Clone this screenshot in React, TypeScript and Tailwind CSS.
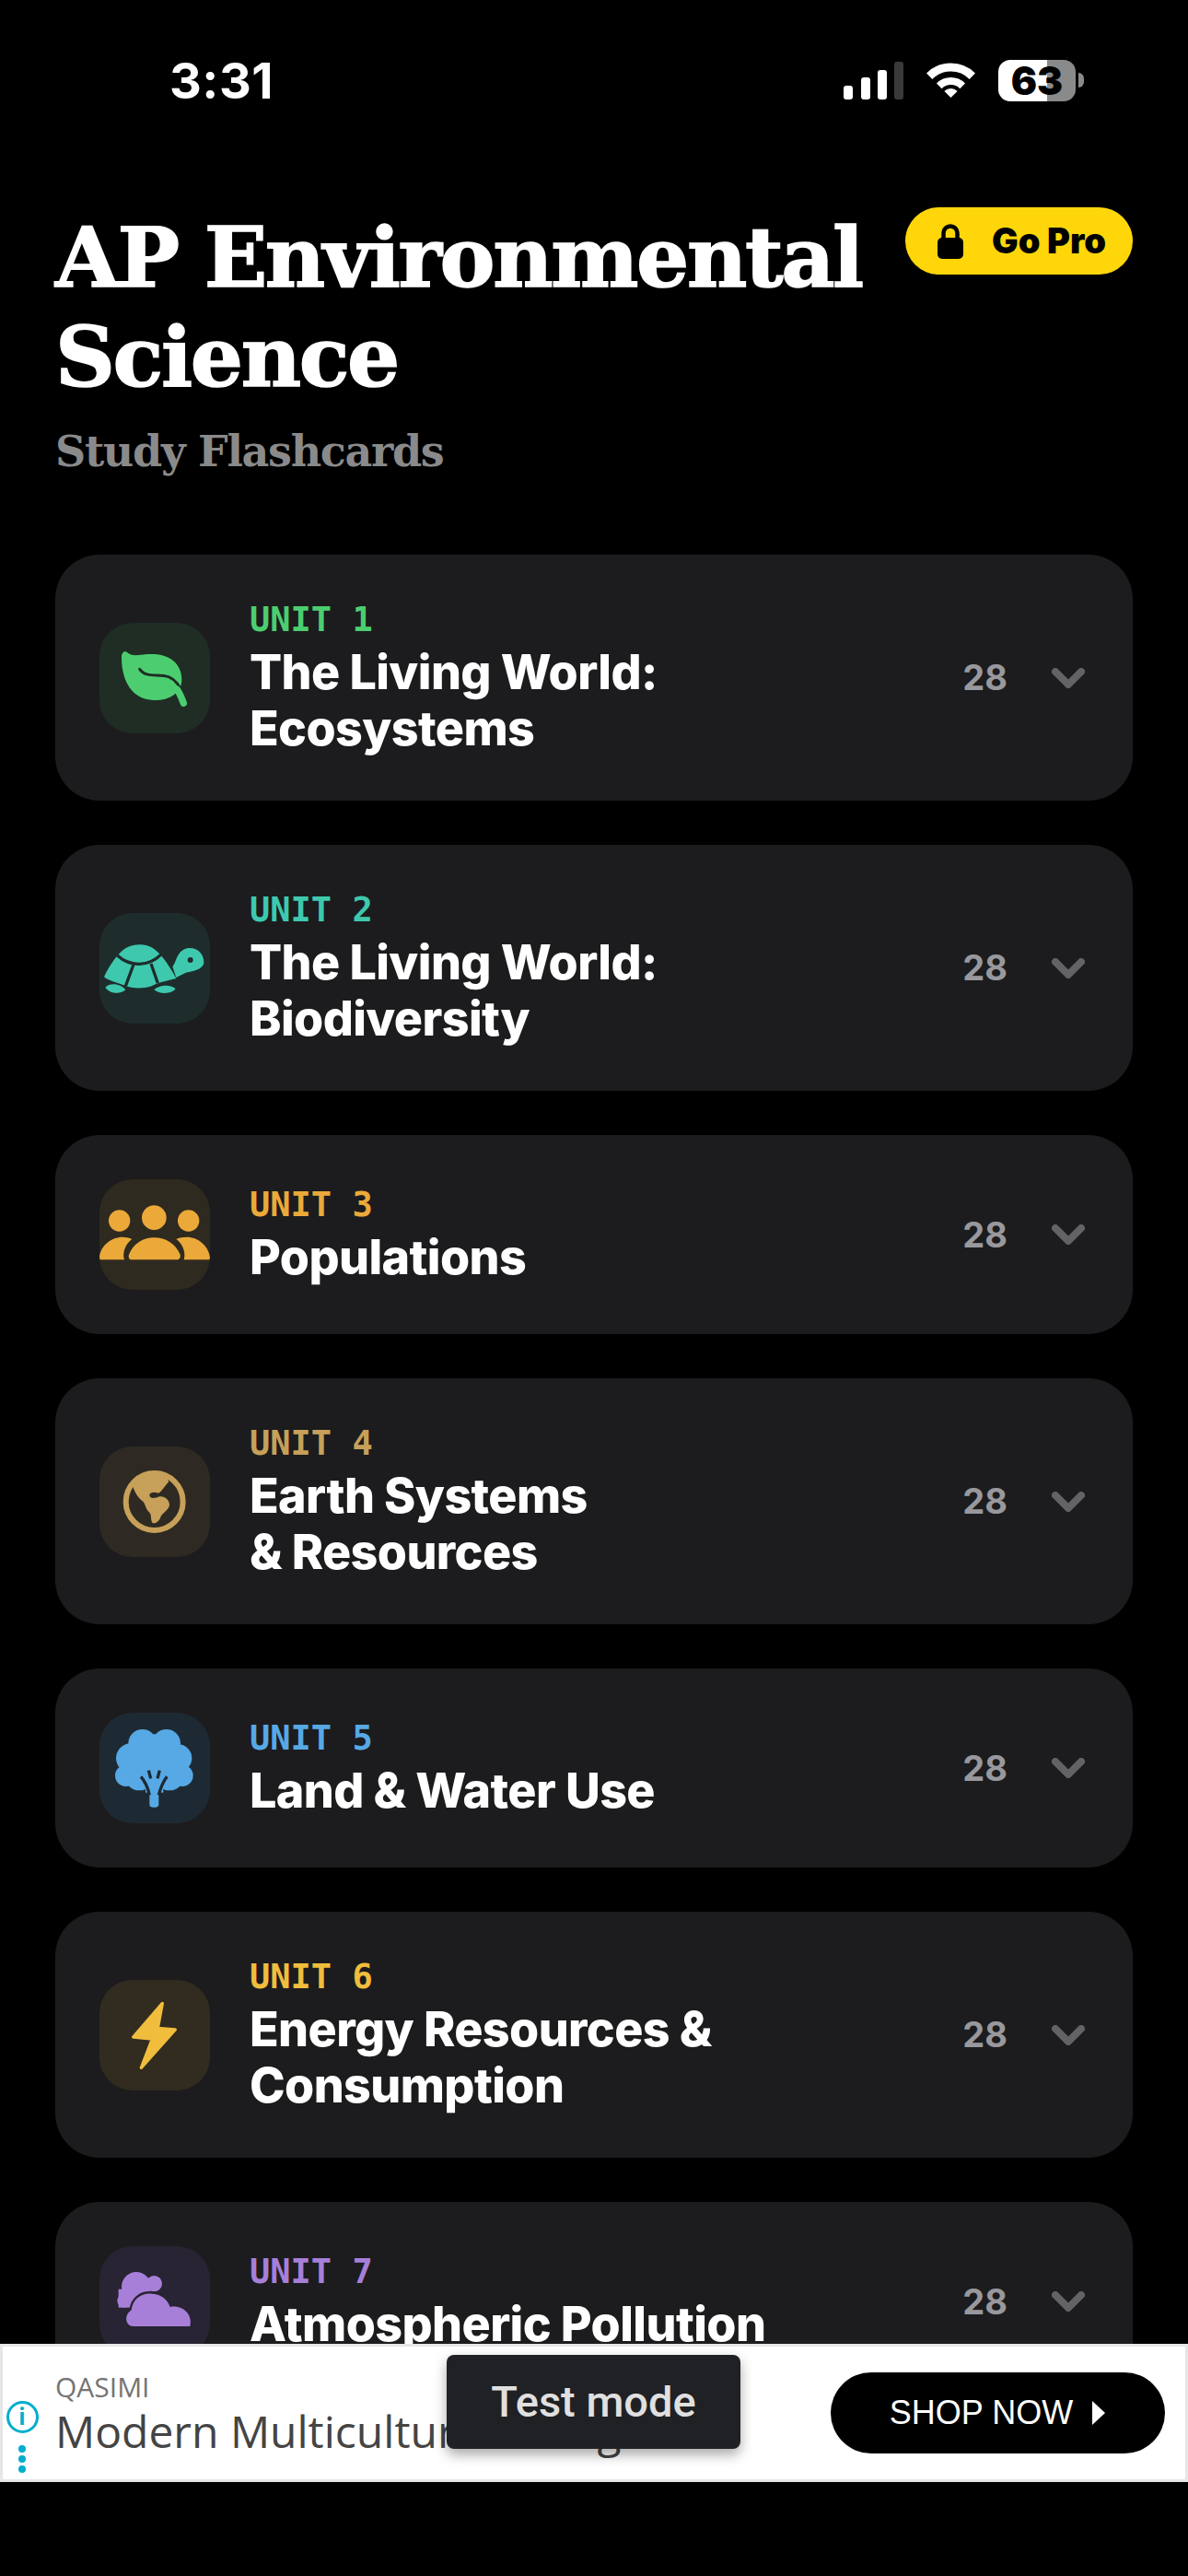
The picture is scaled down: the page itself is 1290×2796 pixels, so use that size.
const LeafIcon = () => (
  <svg viewBox="0 0 360 360" className="h-[120px] w-[120px]">
    <path d="M72 112C72 96 82 88 94 99C108 110 130 104 160 102C225 98 268 130 268 185C268 230 225 254 175 252C110 250 72 195 72 112Z" fill="#4cce70" />
    <path d="M131 151C150 180 195 165 225 176C248 185 262 205 272 235" fill="none" stroke="#1f2d25" strokeWidth="9" strokeLinecap="round" />
    <path d="M252 216C262 230 268 245 274 262" fill="none" stroke="#4cce70" strokeWidth="22" strokeLinecap="round" />
  </svg>
);

const TurtleIcon = () => (
  <svg viewBox="0 0 360 360" className="h-[120px] w-[120px]">
    <path d="M15 208C30 175 60 130 85 115C110 100 150 98 175 115C205 135 235 185 250 213C215 222 190 226 170 238C140 248 105 245 85 238C65 228 30 222 15 208Z" fill="#3ec9ae" />
    <path d="M58 138C100 176 160 176 202 134M112 165L85 238M168 165L190 228" fill="none" stroke="#1e2d2c" strokeWidth="10" />
    <path d="M238 175C252 160 250 125 285 115C320 110 340 135 340 160C340 185 300 190 280 195L250 210Z" fill="#3ec9ae" />
    <circle cx="296" cy="153" r="9" fill="#1e2d2c" />
    <path d="M19 242C35 225 70 230 85 250C70 265 35 265 19 242ZM178 250C195 232 235 232 248 247C235 265 195 265 178 250Z" fill="#3ec9ae" />
  </svg>
);

const PeopleIcon = () => (
  <svg viewBox="0 0 360 360" className="h-[120px] w-[120px]" fill="#eba93a">
    <circle cx="65" cy="135" r="35" />
    <circle cx="178" cy="125" r="40" />
    <circle cx="290" cy="135" r="35" />
    <path d="M105 262C95 262 93 252 97 243C110 212 140 190 178 190C218 190 248 212 262 243C266 252 262 262 252 262Z" />
    <path d="M4 262C0 262 0 258 0 254C3 215 40 188 75 188C85 188 97 190 106 195C88 208 73 235 81 262Z" />
    <path d="M356 262C360 262 360 258 360 254C355 215 320 188 285 188C272 188 258 190 250 195C268 208 283 235 275 262Z" />
  </svg>
);

const GlobeIcon = () => (
  <svg viewBox="0 0 360 360" className="h-[120px] w-[120px]">
    <circle cx="179" cy="180" r="93" fill="none" stroke="#c7a059" strokeWidth="18" />
    <path d="M108 128C125 105 160 92 195 90C210 92 222 102 226 115C215 125 205 145 193 152C180 148 165 148 163 158C163 170 180 170 195 163C210 160 228 172 228 190C228 205 210 212 200 228C195 245 180 254 172 248C165 235 172 222 160 212C148 200 150 185 140 178C125 165 115 150 108 128Z" fill="#c7a059" />
  </svg>
);

const TreeIcon = () => (
  <svg viewBox="0 0 360 360" className="h-[120px] w-[120px]">
    <g fill="#57a9e5">
      <circle cx="140" cy="100" r="46" />
      <circle cx="218" cy="100" r="46" />
      <circle cx="102" cy="148" r="48" />
      <circle cx="256" cy="148" r="45" />
      <circle cx="86" cy="205" r="35" />
      <circle cx="270" cy="205" r="35" />
      <circle cx="130" cy="205" r="48" />
      <circle cx="228" cy="205" r="48" />
      <circle cx="178" cy="150" r="80" />
      <rect x="150" y="210" width="58" height="50" />
      <rect x="163" y="240" width="30" height="68" rx="10" />
    </g>
    <path d="M135 208C150 225 158 245 163 268M220 208C207 225 199 245 193 268M160 188L167 214M196 188L189 214" fill="none" stroke="#1e2a33" strokeWidth="10" />
  </svg>
);

const BoltIcon = () => (
  <svg viewBox="0 0 360 360" className="h-[120px] w-[120px]">
    <path d="M205 76L110 186L172 192L136 286L247 162L190 157Z" fill="#f0bd3d" stroke="#f0bd3d" strokeWidth="10" strokeLinejoin="round" />
  </svg>
);

const CloudIcon = () => (
  <svg viewBox="0 0 360 360" className="h-[120px] w-[120px]">
    <g fill="#a77fd9">
      <circle cx="120" cy="132" r="48" />
      <circle cx="178" cy="122" r="26" />
      <circle cx="80" cy="178" r="22" />
      <rect x="62" y="140" width="70" height="60" />
    </g>
    <path d="M110 261C85 261 78 225 104 208C108 170 140 150 172 155C205 158 222 175 230 198C270 190 305 222 295 261Z" fill="#a77fd9" stroke="#282433" strokeWidth="14" paintOrder="stroke" />
  </svg>
);

const units = [
  { n: 1, title: ["The Living World:", "Ecosystems"], text: "text-[#4cce70]", box: "bg-[#1f2d25]", Icon: LeafIcon },
  { n: 2, title: ["The Living World:", "Biodiversity"], text: "text-[#3ec9ae]", box: "bg-[#1e2d2c]", Icon: TurtleIcon },
  { n: 3, title: ["Populations"], text: "text-[#eba93a]", box: "bg-[#2f2a1f]", Icon: PeopleIcon },
  { n: 4, title: ["Earth Systems", "& Resources"], text: "text-[#c7a059]", box: "bg-[#2e2a23]", Icon: GlobeIcon },
  { n: 5, title: ["Land & Water Use"], text: "text-[#57a9e5]", box: "bg-[#1e2a33]", Icon: TreeIcon },
  { n: 6, title: ["Energy Resources &", "Consumption"], text: "text-[#f0bd3d]", box: "bg-[#312c1f]", Icon: BoltIcon },
  { n: 7, title: ["Atmospheric Pollution"], text: "text-[#a77fd9]", box: "bg-[#282433]", Icon: CloudIcon },
];

function StatusBar() {
  return (
    <div className="flex h-[174px] items-center justify-between pl-[184px] pr-[113px]">
      <span className="text-[54px] font-bold tracking-[0.5px] text-white">3:31</span>
      <div className="flex items-center gap-[23px]">
        <svg viewBox="0 0 65 41" className="h-[41px] w-[65px]">
          <rect x="0" y="26" width="10" height="15" rx="3" fill="#fff" />
          <rect x="19" y="17" width="10" height="24" rx="3" fill="#fff" />
          <rect x="37" y="9" width="10" height="32" rx="3" fill="#fff" />
          <rect x="55" y="0" width="10" height="41" rx="3" fill="#3a3a3c" />
        </svg>
        <svg viewBox="0 0 57 44" className="h-[44px] w-[57px]">
          <path d="M5.2 17.7A33 33 0 0 1 51.8 17.7" fill="none" stroke="#fff" strokeWidth="9" />
          <path d="M15.8 28.3A18 18 0 0 1 41.2 28.3" fill="none" stroke="#fff" strokeWidth="8" />
          <path d="M28.5 41L21.4 33.9A10 10 0 0 1 35.6 33.9Z" fill="#fff" />
        </svg>
        <div className="flex items-center gap-[3px]">
          <div className="flex h-[45px] w-[84px] items-center justify-center rounded-[13px] bg-[linear-gradient(90deg,#ffffff_53px,#8a8a8a_53px)] text-[42px] font-black leading-[45px] text-black">
            63
          </div>
          <div className="h-[16px] w-[6px] rounded-r-full bg-[#8a8a8a]" />
        </div>
      </div>
    </div>
  );
}

function UnitCard({ unit }: { unit: (typeof units)[number] }) {
  const Icon = unit.Icon;
  return (
    <div className="flex items-center rounded-[48px] bg-[#1c1c1e] py-12 pl-12 pr-[52px]">
      <div className={`flex h-[120px] w-[120px] shrink-0 items-center justify-center overflow-hidden rounded-[36px] ${unit.box}`}>
        <Icon />
      </div>
      <div className="ml-[43px] flex-1">
        <div className={`mb-[3px] font-['DejaVu_Sans_Mono'] text-[37px] font-bold leading-[46px] ${unit.text}`}>UNIT {unit.n}</div>
        <div className="text-[52px] font-extrabold leading-[61px] tracking-[-0.6px] text-white">
          {unit.title.map((line) => (
            <div key={line}>{line}</div>
          ))}
        </div>
      </div>
      <span className="text-[38px] font-bold text-[#98989d]">28</span>
      <svg viewBox="0 0 36 22" className="ml-[48px] h-[22px] w-[36px]">
        <path d="M4 4L18 18L32 4" fill="none" stroke="#636366" strokeWidth="8" strokeLinecap="round" strokeLinejoin="round" />
      </svg>
    </div>
  );
}

function AdBanner() {
  return (
    <div className="relative flex h-[150px] shrink-0 items-center border-[3px] border-[#e6e6e6] bg-white">
      <div className="flex w-[57px] shrink-0 flex-col items-center self-stretch pr-[15px] pt-[59px]">
        <div className="flex h-[35px] w-[35px] items-center justify-center rounded-full border-[3px] border-[#00aecd] text-[25px] font-bold leading-none text-[#00aecd]">i</div>
        <div className="mt-[13px] flex flex-col gap-[3px]">
          <div className="h-[8px] w-[8px] rounded-full bg-[#00aecd]" />
          <div className="h-[8px] w-[8px] rounded-full bg-[#00aecd]" />
          <div className="h-[8px] w-[8px] rounded-full bg-[#00aecd]" />
        </div>
      </div>
      <div className="flex-1 whitespace-nowrap pt-[4px] font-['Open_Sans']">
        <div className="text-[30px] leading-[36px] text-[#757575]">QASIMI</div>
        <div className="text-[48px] leading-[60px] text-[#444]">Modern Multicultural Living</div>
      </div>
      <div className="mr-[22px] flex h-[88px] w-[363px] shrink-0 items-center justify-center gap-[20px] rounded-full bg-black font-['Liberation_Sans'] text-[36px] text-white">
        SHOP NOW
        <svg viewBox="0 0 16 28" className="h-[28px] w-[16px]">
          <path d="M1 1L15 14L1 27Z" fill="#fff" />
        </svg>
      </div>
      <div className="absolute left-[482px] top-[9px] flex h-[102px] w-[319px] items-center justify-center rounded-[8px] bg-[#202124] font-['Roboto'] text-[47px] font-medium text-[#e0e0e0] shadow-[0_6px_14px_rgba(0,0,0,0.35)]">
        Test mode
      </div>
    </div>
  );
}

export default function App() {
  return (
    <div className="flex h-[2796px] w-[1290px] flex-col overflow-hidden bg-black font-['Inter',sans-serif]">
      <div className="min-h-0 flex-1 overflow-hidden">
        <StatusBar />
        <div className="flex items-start justify-between px-[60px] pt-[51px]">
          <div>
            <h1 className="font-['DejaVu_Serif'] text-[90px] font-bold leading-[108px] tracking-[-2.4px] text-white [-webkit-text-stroke:1.5px_white]">
              AP Environmental
              <br />
              Science
            </h1>
            <p className="mt-[19px] font-['DejaVu_Serif'] text-[46px] font-bold leading-[60px] tracking-[-1.3px] text-[#8a8a8a]">Study Flashcards</p>
          </div>
          <div className="flex h-[73px] w-[247px] shrink-0 items-center gap-[31px] rounded-full bg-[#ffd60a] pl-[35px]">
            <svg viewBox="0 0 28 38" className="h-[38px] w-[28px]">
              <rect x="0" y="15" width="28" height="23" rx="5" fill="#000" />
              <path d="M6.5 17V10A7.5 7.5 0 0 1 21.5 10V17" fill="none" stroke="#000" strokeWidth="4.5" />
            </svg>
            <span className="text-[38px] font-black text-black">Go Pro</span>
          </div>
        </div>
        <div className="mt-[82px] flex flex-col gap-12 px-[60px]">
          {units.map((unit) => (
            <UnitCard key={unit.n} unit={unit} />
          ))}
        </div>
      </div>
      <AdBanner />
      <div className="h-[102px] shrink-0 bg-black" />
    </div>
  );
}
